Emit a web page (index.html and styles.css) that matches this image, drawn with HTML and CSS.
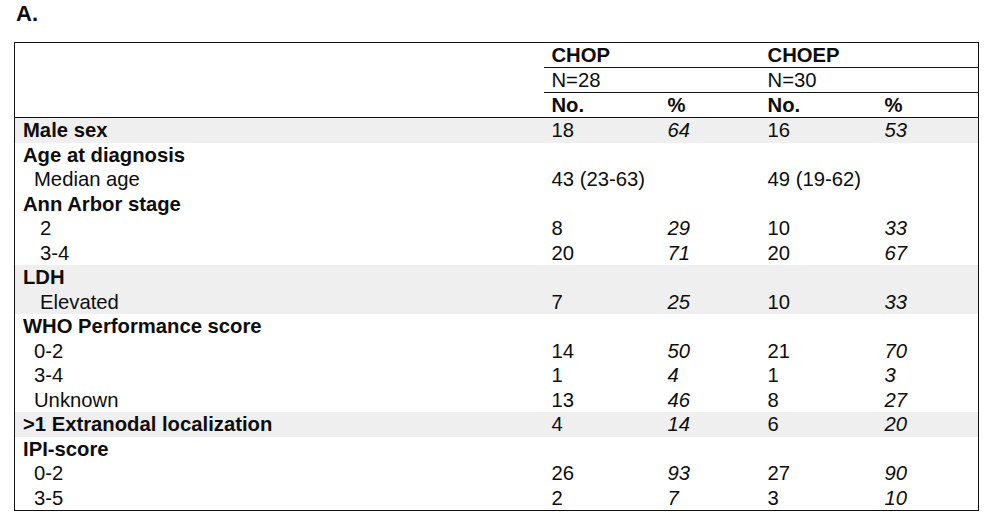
FILE: index.html
```html
<!DOCTYPE html>
<html>
<head>
<meta charset="utf-8">
<link rel="stylesheet" href="styles.css">
</head>
<body>
<div class="title">A.</div>
<table class="tbl">
  <colgroup>
    <col class="c-label"><col class="c-no1"><col class="c-pct1"><col class="c-no2"><col class="c-pct2">
  </colgroup>
  <thead>
    <tr class="h h1">
      <th class="blank"></th>
      <th class="grp" colspan="2">CHOP</th>
      <th class="grp" colspan="2">CHOEP</th>
    </tr>
    <tr class="h h2">
      <th class="blank"></th>
      <td class="grp" colspan="2">N=28</td>
      <td class="grp" colspan="2">N=30</td>
    </tr>
    <tr class="h h3">
      <th class="blank"></th>
      <th>No.</th><th>%</th><th>No.</th><th>%</th>
    </tr>
  </thead>
  <tbody>
    <tr class="gray"><td class="lbl">Male sex</td><td>18</td><td class="pct">64</td><td>16</td><td class="pct">53</td></tr>
    <tr><td class="lbl">Age at diagnosis</td><td></td><td></td><td></td><td></td></tr>
    <tr><td class="sub">Median age</td><td>43 (23-63)</td><td></td><td>49 (19-62)</td><td></td></tr>
    <tr><td class="lbl">Ann Arbor stage</td><td></td><td></td><td></td><td></td></tr>
    <tr><td class="sub2">2</td><td>8</td><td class="pct">29</td><td>10</td><td class="pct">33</td></tr>
    <tr><td class="sub2">3-4</td><td>20</td><td class="pct">71</td><td>20</td><td class="pct">67</td></tr>
    <tr class="gray"><td class="lbl">LDH</td><td></td><td></td><td></td><td></td></tr>
    <tr class="gray"><td class="sub2">Elevated</td><td>7</td><td class="pct">25</td><td>10</td><td class="pct">33</td></tr>
    <tr><td class="lbl">WHO Performance score</td><td></td><td></td><td></td><td></td></tr>
    <tr><td class="sub">0-2</td><td>14</td><td class="pct">50</td><td>21</td><td class="pct">70</td></tr>
    <tr><td class="sub">3-4</td><td>1</td><td class="pct">4</td><td>1</td><td class="pct">3</td></tr>
    <tr><td class="sub">Unknown</td><td>13</td><td class="pct">46</td><td>8</td><td class="pct">27</td></tr>
    <tr class="gray"><td class="lbl">&gt;1 Extranodal localization</td><td>4</td><td class="pct">14</td><td>6</td><td class="pct">20</td></tr>
    <tr><td class="lbl">IPI-score</td><td></td><td></td><td></td><td></td></tr>
    <tr><td class="sub">0-2</td><td>26</td><td class="pct">93</td><td>27</td><td class="pct">90</td></tr>
    <tr><td class="sub">3-5</td><td>2</td><td class="pct">7</td><td>3</td><td class="pct">10</td></tr>
  </tbody>
</table>
</body>
</html>
```

FILE: styles.css
```css
html, body {
  margin: 0;
  padding: 0;
  background: #ffffff;
}
body {
  font-family: "Liberation Sans", Arial, sans-serif;
  color: #0d0d0d;
}
.title {
  height: 42px;
  box-sizing: border-box;
  padding: 1px 0 0 16px;
  font-size: 22px;
  font-weight: bold;
  line-height: 25px;
}
.tbl {
  margin-left: 14px;
  width: 964px;
  table-layout: fixed;
  border-collapse: collapse;
  border: 1px solid #111111;
  font-size: 20.25px;
}
.c-label { width: 529px; }
.c-no1 { width: 116px; }
.c-pct1 { width: 100px; }
.c-no2 { width: 117px; }
.c-pct2 { width: 102px; }
.tbl th, .tbl td {
  padding: 0 0 0 8px;
  text-align: left;
  vertical-align: top;
  white-space: nowrap;
  height: 24.5px;
  line-height: 24.5px;
}
.tbl th { font-weight: bold; }
.h th, .h td {
  height: 24px;
  line-height: 24px;
}
.h .grp {
  border-bottom: 1px solid #111111;
}
.h3 th {
  border-bottom: 1px solid #111111;
}
.gray td { background: #efefef; }
.tbl td.lbl {
  font-weight: bold;
  padding-left: 8px;
}
.tbl td.sub { padding-left: 19px; }
.tbl td.sub2 { padding-left: 25px; }
.pct { font-style: italic; }
```
